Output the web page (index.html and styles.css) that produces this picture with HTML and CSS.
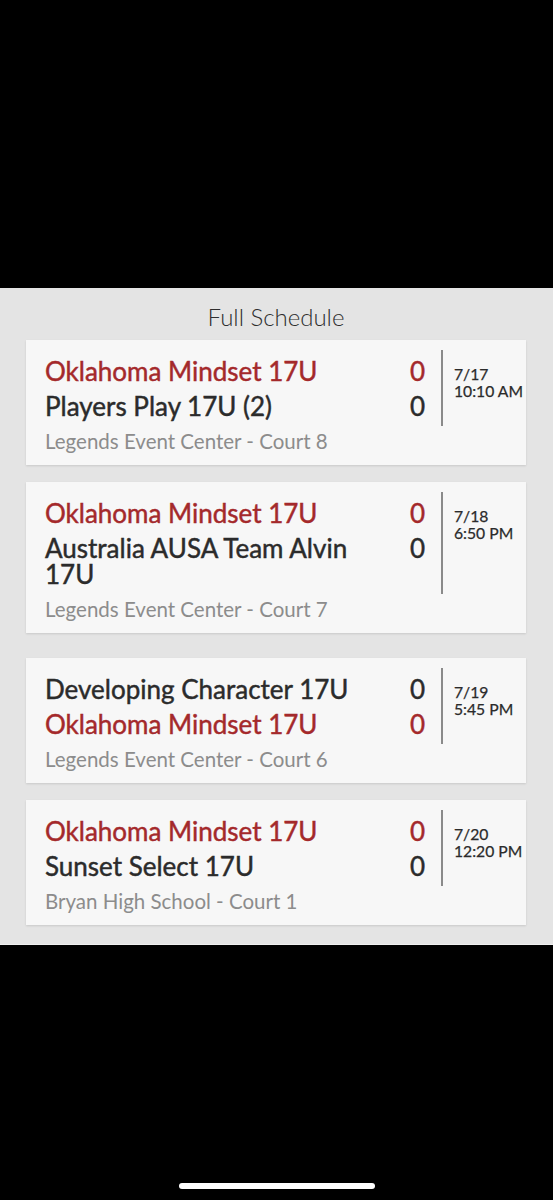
FILE: index.html
```html
<!DOCTYPE html>
<html>
<head>
<meta charset="utf-8">
<link rel="stylesheet" href="styles.css">
</head>
<body>
<div class="screen">
  <div class="top-black"></div>
  <section class="panel">
    <h1 class="title">Full Schedule</h1>

    <div class="card">
      <div class="match">
        <div class="teams">
          <div class="row home"><span class="name">Oklahoma Mindset 17U</span><span class="score">0</span></div>
          <div class="row"><span class="name">Players Play 17U (2)</span><span class="score">0</span></div>
        </div>
        <div class="when"><div>7/17</div><div>10:10 AM</div></div>
      </div>
      <div class="venue">Legends Event Center - Court 8</div>
    </div>

    <div class="card card-spaced">
      <div class="match">
        <div class="teams">
          <div class="row home"><span class="name">Oklahoma Mindset 17U</span><span class="score">0</span></div>
          <div class="row"><span class="name">Australia AUSA Team Alvin 17U</span><span class="score">0</span></div>
        </div>
        <div class="when"><div>7/18</div><div>6:50 PM</div></div>
      </div>
      <div class="venue">Legends Event Center - Court 7</div>
    </div>

    <div class="card">
      <div class="match">
        <div class="teams">
          <div class="row"><span class="name">Developing Character 17U</span><span class="score">0</span></div>
          <div class="row home"><span class="name">Oklahoma Mindset 17U</span><span class="score">0</span></div>
        </div>
        <div class="when"><div>7/19</div><div>5:45 PM</div></div>
      </div>
      <div class="venue">Legends Event Center - Court 6</div>
    </div>

    <div class="card">
      <div class="match">
        <div class="teams">
          <div class="row home"><span class="name">Oklahoma Mindset 17U</span><span class="score">0</span></div>
          <div class="row"><span class="name">Sunset Select 17U</span><span class="score">0</span></div>
        </div>
        <div class="when"><div>7/20</div><div>12:20 PM</div></div>
      </div>
      <div class="venue">Bryan High School - Court 1</div>
    </div>
  </section>
  <div class="bottom-black">
    <div class="home-indicator"></div>
  </div>
</div>
</body>
</html>
```
FILE: styles.css
```css
html, body {
  margin: 0;
  padding: 0;
  background: #000;
}
body {
  font-family: Lato, "Open Sans", sans-serif;
  width: 553px;
  height: 1200px;
  overflow: hidden;
}
.screen {
  display: flex;
  flex-direction: column;
  height: 1200px;
}
.top-black {
  height: 288px;
  flex: none;
}
.panel {
  background: #e4e4e4;
  padding: 14px 27px 19px 26px;
  border-bottom: 1px solid #f0f0f0;
  display: flex;
  flex-direction: column;
  gap: 17px;
}
.title {
  margin: 0 0 -9px;
  font-weight: 300;
  font-size: 24px;
  line-height: 30px;
  color: #2e2e2e;
  text-align: center;
}
.card {
  background: #f7f7f7;
  box-shadow: 0 1px 2px rgba(0,0,0,0.12);
  padding: 10px 0 11px 19px;
}
.card-spaced {
  margin-bottom: 8px;
}
.match {
  display: flex;
}
.teams {
  flex: 1;
  padding: 3px 0;
}
.row {
  display: flex;
  align-items: flex-start;
  padding: 4.5px 0;
  font-size: 26px;
  line-height: 26px;
  color: #2b2b2b;
  -webkit-text-stroke: 0.45px currentColor;
}
.row.home {
  color: #a4292b;
}
.name {
  flex: 1;
  padding-right: 20px;
}
.score {
  width: 20px;
  text-align: right;
  margin-right: 16px;
}
.when {
  width: 72px;
  border-left: 2px solid #8a8a8a;
  padding: 16px 0 0 11px;
  font-size: 15.7px;
  line-height: 17px;
  color: #2b2b2b;
  -webkit-text-stroke: 0.25px currentColor;
}
.venue {
  margin-top: 3px;
  font-size: 20.5px;
  line-height: 25px;
  color: #8c8c8c;
}
.bottom-black {
  flex: 1;
  display: flex;
  justify-content: center;
  align-items: flex-end;
  padding-bottom: 11px;
}
.home-indicator {
  width: 196px;
  height: 6px;
  border-radius: 3px;
  background: #fff;
}
```
